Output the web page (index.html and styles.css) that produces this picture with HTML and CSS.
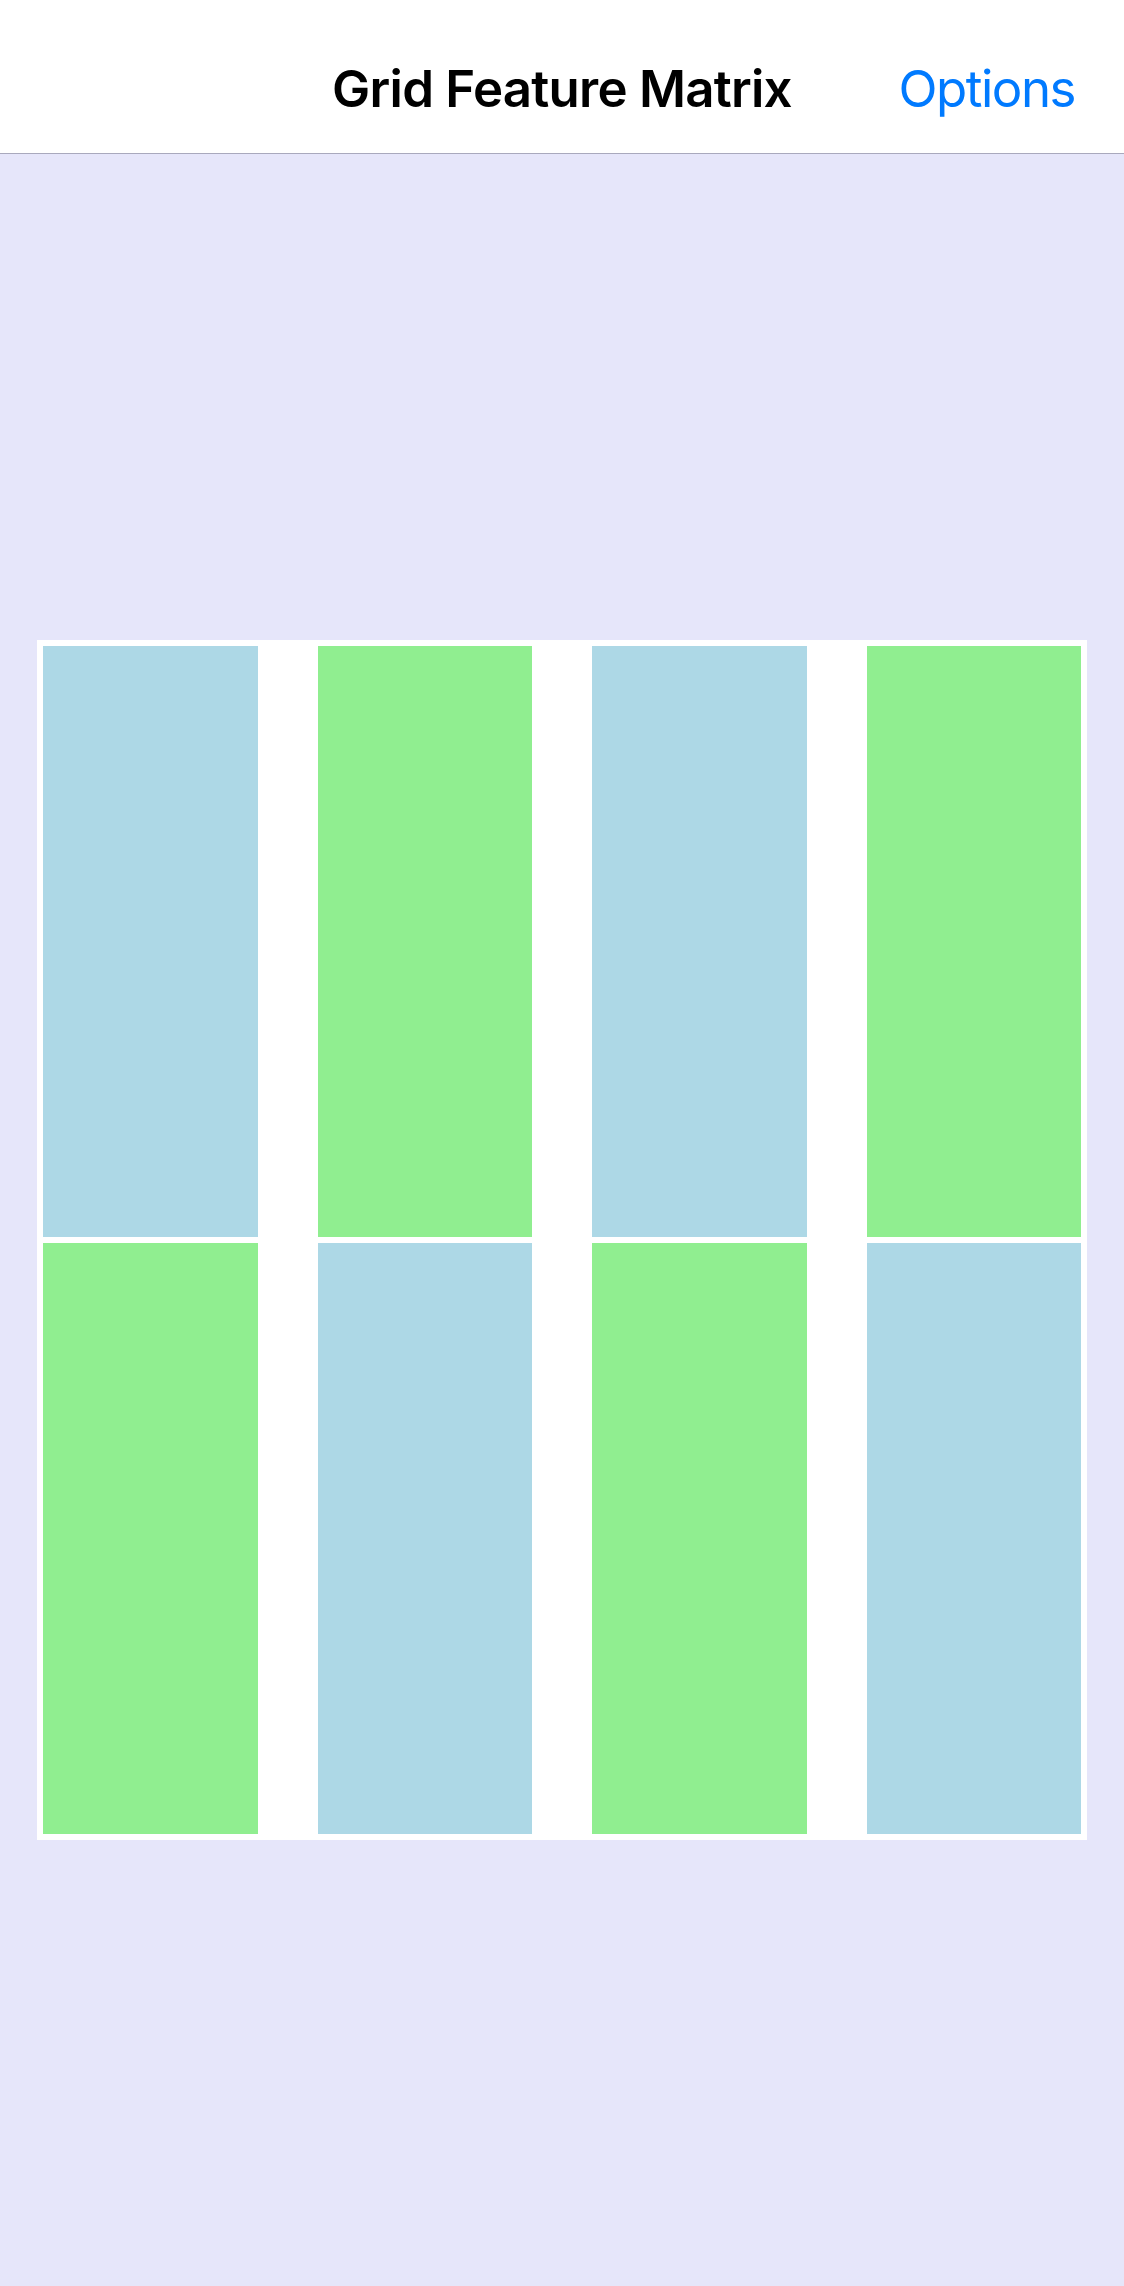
FILE: index.html
```html
<!DOCTYPE html>
<html lang="en">
<head>
<meta charset="utf-8">
<title>Grid Feature Matrix</title>
<link rel="stylesheet" href="styles.css">
</head>
<body>
<header class="navbar">
  <div class="nav-side"></div>
  <h1 class="nav-title">Grid Feature Matrix</h1>
  <div class="nav-side nav-right"><span class="nav-action">Options</span></div>
</header>
<main class="content">
  <div class="matrix">
    <div class="cell blue"></div>
    <div class="cell green"></div>
    <div class="cell blue"></div>
    <div class="cell green"></div>
    <div class="cell green"></div>
    <div class="cell blue"></div>
    <div class="cell green"></div>
    <div class="cell blue"></div>
  </div>
</main>
</body>
</html>
```
FILE: styles.css
```css
html, body {
  margin: 0;
  padding: 0;
}
body {
  width: 1124px;
  min-height: 2286px;
  background: #e6e6fa;
  font-family: Inter, "Noto Sans", "Liberation Sans", sans-serif;
}
.navbar {
  box-sizing: border-box;
  height: 154px;
  background: #ffffff;
  border-bottom: 1px solid #a9a9bd;
  display: grid;
  grid-template-columns: 1fr auto 1fr;
  align-items: start;
  padding-top: 58px;
}
.nav-title {
  margin: 0;
  font-size: 51px;
  line-height: 61px;
  font-weight: 600;
  color: #000;
  letter-spacing: -0.75px;
  text-align: center;
}
.nav-right {
  display: flex;
  justify-content: flex-end;
  padding-right: 49px;
}
.nav-action {
  font-size: 51px;
  line-height: 61px;
  font-weight: 400;
  color: #007aff;
  letter-spacing: -1.5px;
}
.content {
  padding: 486px 37px 0 37px;
}
.matrix {
  background: #ffffff;
  height: 1200px;
  box-sizing: border-box;
  padding: 6px;
  display: grid;
  grid-template-columns: repeat(4, 1fr);
  grid-template-rows: repeat(2, 1fr);
  column-gap: 60px;
  row-gap: 6px;
}
.blue { background: #add8e6; }
.green { background: #90ee90; }
```
